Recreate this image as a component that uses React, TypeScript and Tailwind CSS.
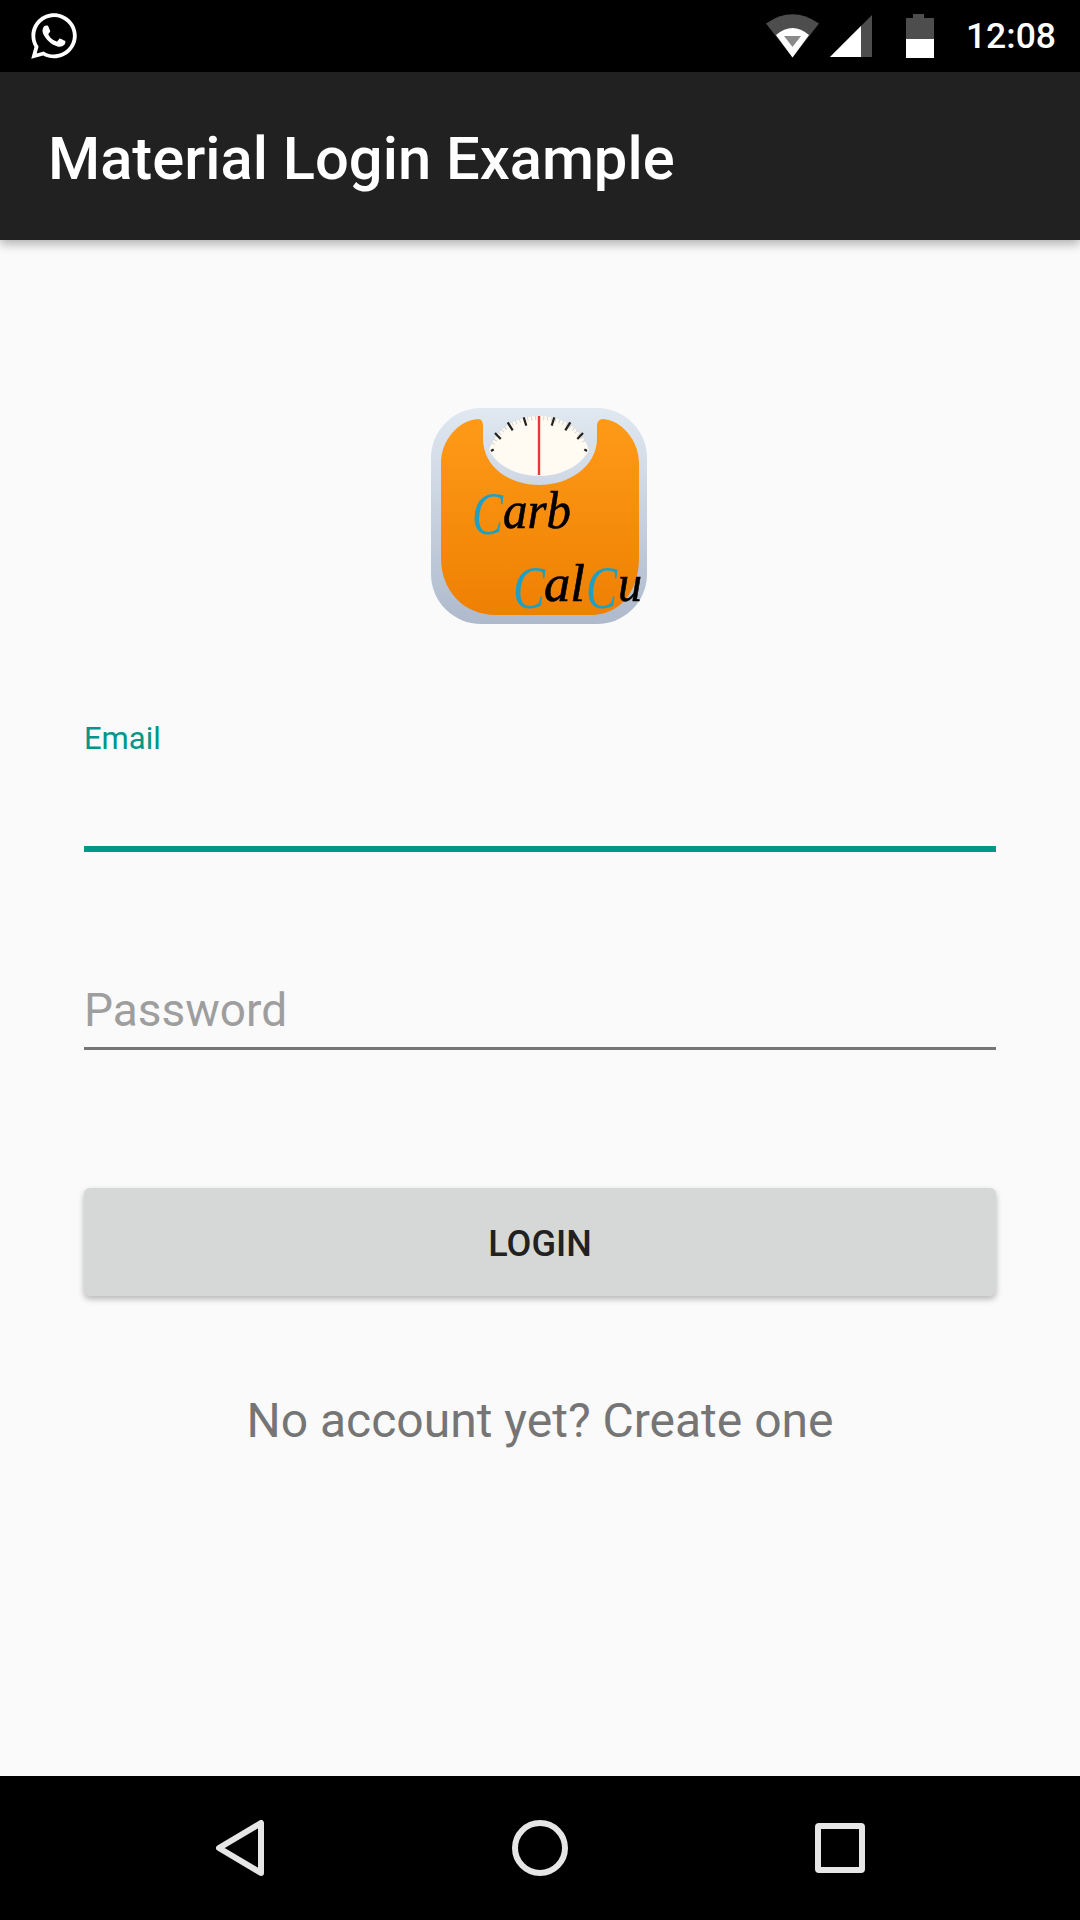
import { FaWhatsapp } from "react-icons/fa";

function WifiIcon() {
  return (
    <svg width="54" height="44" viewBox="0 0 54 44">
      <path d="M26.5 43.5 L0 9.5 Q26.5 -9 53 9.5 Z" fill="#4d4d4d" />
      <path d="M26.5 43.5 L10 21 Q26.5 7 43 21 Z" fill="#ffffff" />
      <path d="M26.5 33 L18 22 H35 Z" fill="#8a8a8a" />
    </svg>
  );
}

function SignalIcon() {
  return (
    <svg width="42" height="42" viewBox="0 0 42 42">
      <path d="M42 0 V42 H0 Z" fill="#4d4d4d" />
      <path d="M31 11 V42 H0 Z" fill="#ffffff" />
    </svg>
  );
}

function BatteryIcon() {
  return (
    <svg width="28" height="44" viewBox="0 0 28 44">
      <path d="M7 0 H18 V4 H28 V25 H0 V4 H7 Z" fill="#4d4d4d" />
      <rect x="0" y="25" width="28" height="19" fill="#ffffff" />
    </svg>
  );
}

const dialTicks = [
  [60, 43, 62.7, 41.4],
  [64, 25, 69.7, 31],
  [76.7, 14.4, 81.7, 22.4],
  [92.7, 9.4, 95.3, 17.7],
];

function CarbLogo() {
  const serif = "'Liberation Serif', serif";
  return (
    <svg width="216" height="216" viewBox="0 0 216 216" className="shrink-0 self-start ml-[347px]">
      <defs>
        <linearGradient id="frame" x1="0" y1="0" x2="0" y2="1">
          <stop offset="0" stopColor="#e0e8f1" />
          <stop offset="1" stopColor="#aebacc" />
        </linearGradient>
        <linearGradient id="body" x1="0" y1="0" x2="0" y2="1">
          <stop offset="0" stopColor="#ff9a18" />
          <stop offset="1" stopColor="#ee8002" />
        </linearGradient>
      </defs>
      <rect width="216" height="216" rx="50" fill="url(#frame)" />
      <path
        d="M47 11 C51 11 52 14 52 18 V30 C52 60 80 77 108 77 C136 77 166 60 166 30 V18 C166 14 168 11 172 11 C190 12 208 32 208 55 V150 C208 182 190 207 160 207 H65 C32 207 10 182 10 150 V55 C10 32 28 12 47 11 Z"
        fill="url(#body)"
      />
      <path d="M58 42 C66 18 88 8 108 8 C128 8 150 18 158 42 C150 58 130 68 108 68 C86 68 66 58 58 42 Z" fill="#fffaf2" />
      <path d="M62 36 C70 18 90 10 108 10 C126 10 146 18 154 36" fill="none" stroke="#d9d4cb" strokeWidth="4" strokeDasharray="1 3" />
      {dialTicks.map(([x1, y1, x2, y2]) => (
        <g key={x1} stroke="#222222" strokeWidth="2.2">
          <line x1={x1} y1={y1} x2={x2} y2={y2} />
          <line x1={216 - x1} y1={y1} x2={216 - x2} y2={y2} />
        </g>
      ))}
      <line x1="108" y1="8" x2="108" y2="67" stroke="#e5383b" strokeWidth="2.4" />
      <g fontFamily={serif} fontStyle="italic">
        <text x="41" y="126" fontSize="62" fill="#1f9fc2" textLength={31} lengthAdjust="spacingAndGlyphs">
          C
        </text>
        <text x="72" y="120" fontSize="52" fill="#000000" stroke="#000000" strokeWidth="0.6" textLength={68} lengthAdjust="spacingAndGlyphs">
          arb
        </text>
        <text x="82" y="200" fontSize="62" fill="#1f9fc2" textLength={32} lengthAdjust="spacingAndGlyphs">
          C
        </text>
        <text x="113" y="193" fontSize="52" fill="#000000" stroke="#000000" strokeWidth="0.6" textLength={41} lengthAdjust="spacingAndGlyphs">
          al
        </text>
        <text x="155" y="200" fontSize="62" fill="#1f9fc2" textLength={31} lengthAdjust="spacingAndGlyphs">
          C
        </text>
        <text x="187" y="193" fontSize="52" fill="#000000" stroke="#000000" strokeWidth="0.6" textLength={24} lengthAdjust="spacingAndGlyphs">
          u
        </text>
      </g>
    </svg>
  );
}

export default function App() {
  return (
    <div className="w-[1080px] h-[1920px] flex flex-col bg-[#fafafa] font-['Roboto',sans-serif] overflow-hidden">
      <div className="h-[72px] shrink-0 bg-black flex items-center pl-[28px] pr-[24px]">
        <FaWhatsapp className="text-white" size={52} />
        <div className="ml-auto flex items-center">
          <WifiIcon />
          <div className="ml-[10px]">
            <SignalIcon />
          </div>
          <div className="ml-[34px]">
            <BatteryIcon />
          </div>
          <span className="ml-[32px] text-[35.5px] leading-[42px] font-medium text-white">12:08</span>
        </div>
      </div>

      <div className="relative z-10 h-[168px] shrink-0 bg-[#212121] flex items-center pl-[48px] pt-[5px] shadow-[0_4px_10px_rgba(0,0,0,0.3)]">
        <h1 className="text-[59.7px] leading-[72px] font-medium text-white">Material Login Example</h1>
      </div>

      <div className="flex-1 flex flex-col px-[84px] pt-[168px]">
        <CarbLogo />

        <div className="mt-[97px] text-[31px] leading-[36px] text-[#009688]">Email</div>
        <div className="mt-[89px] h-[6px] bg-[#009688]" />

        <div className="mt-[131px] text-[46px] leading-[54px] text-[#9e9e9e]">Password</div>
        <div className="mt-[10px] h-[3px] bg-[#757575]" />

        <button className="mt-[138px] h-[108px] pt-[4px] rounded-[6px] bg-[#d6d7d7] text-[36px] font-medium text-[#212121] shadow-[0_3px_6px_rgba(0,0,0,0.28)]">
          LOGIN
        </button>

        <div className="mt-[97px] text-center text-[48px] leading-[56px] text-[#757575]">No account yet? Create one</div>
      </div>

      <div className="h-[144px] shrink-0 bg-black flex items-center justify-center">
        <div className="w-[300px] flex justify-center">
          <svg width="48" height="56" viewBox="0 0 48 56">
            <path d="M45 3 V53 L3 28 Z" fill="none" stroke="#e6e6e6" strokeWidth="6" strokeLinejoin="round" />
          </svg>
        </div>
        <div className="w-[300px] flex justify-center">
          <div className="size-[56px] rounded-full border-[6px] border-[#e6e6e6]" />
        </div>
        <div className="w-[300px] flex justify-center">
          <div className="size-[50px] rounded-[4px] border-[6px] border-[#e6e6e6]" />
        </div>
      </div>
    </div>
  );
}
